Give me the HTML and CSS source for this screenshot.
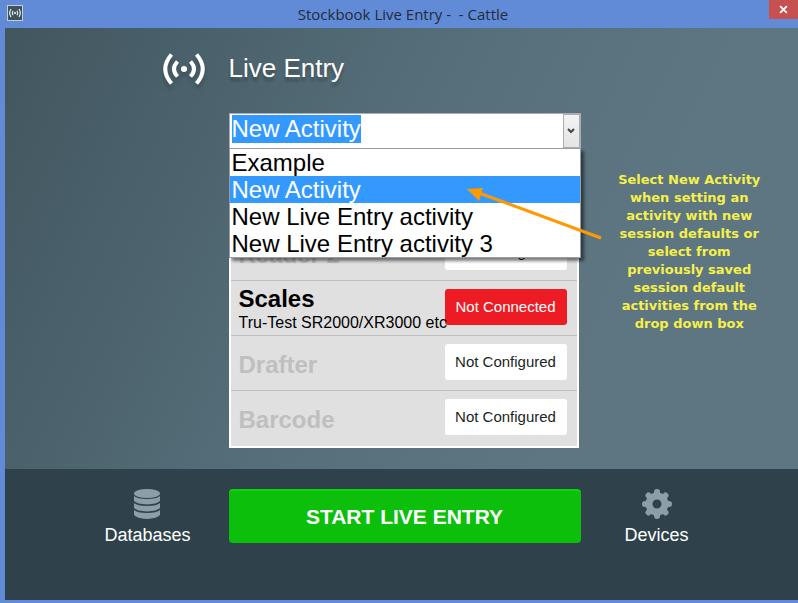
FILE: index.html
```html
<!DOCTYPE html>
<html lang="en">
<head>
  <meta charset="UTF-8" />
  <meta name="viewport" content="width=device-width, initial-scale=1.0" />
  <title>Stockbook Live Entry</title>
  <link rel="stylesheet" href="styles.css">
</head>
<body>
  <header class="titlebar">
    <svg class="app-icon" viewBox="0 0 16 16" aria-hidden="true">
      <rect x="0.5" y="0.5" width="15" height="15" fill="#3d545d" stroke="#c3cdd3" />
      <g fill="none" stroke="#e6ecef" stroke-width="1.2">
        <path d="M4 4Q1.400 8 4 12M12 4Q14.600 8 12 12M6 5.800Q4.600 8 6 10.200M10 5.800Q11.400 8 10 10.200" />
      </g>
      <circle cx="8" cy="8" r="1" fill="#fff" />
    </svg>
    <span class="titlebar-text">Stockbook Live Entry -&nbsp; - Cattle</span>
    <button class="close-btn" type="button" aria-label="Close">
      <svg viewBox="0 0 8 8" width="9" height="9"><path d="M1 1L7 7M7 1L1 7" stroke="#fff" stroke-width="1.600" /></svg>
    </button>
  </header>

  <main>
    <svg class="signal-icon" viewBox="0 0 42 32" aria-hidden="true">
      <g fill="none" stroke="#fff" stroke-width="4">
        <path d="M8.500 1.500Q-4 16 8.500 30.500M33.500 1.500Q46 16 33.500 30.500" />
        <path d="M14.500 8.500Q7.500 16 14.500 23.500M27.500 8.500Q34.500 16 27.500 23.500" />
      </g>
      <circle cx="21" cy="16" r="3" fill="#fff" />
    </svg>
    <h1>Live Entry</h1>

    <section class="session">
      <div class="combo">
        <input type="text" id="activity" class="combo-input" value="New Activity" aria-label="Activity" autocomplete="off" />
        <button class="combo-btn" type="button" aria-label="Show activities">
          <svg viewBox="0 0 8 6" width="8" height="6"><path d="M1 1L4 4L7 1" fill="none" stroke="#444" stroke-width="2" /></svg>
        </button>
        <select class="combo-list" id="activity-list" size="4" aria-label="Saved activities">
          <option>Example</option>
          <option selected>New Activity</option>
          <option>New Live Entry activity</option>
          <option>New Live Entry activity 3</option>
        </select>
      </div>

      <ul class="devices">
        <li class="device off">
          <div class="device-info"><h2>Reader 2</h2></div>
          <button class="status" type="button">Not Configured</button>
        </li>
        <li class="device">
          <div class="device-info">
            <h2>Scales</h2>
            <p>Tru-Test SR2000/XR3000 etc</p>
          </div>
          <button class="status error" type="button">Not Connected</button>
        </li>
        <li class="device off">
          <div class="device-info"><h2>Drafter</h2></div>
          <button class="status" type="button">Not Configured</button>
        </li>
        <li class="device off">
          <div class="device-info"><h2>Barcode</h2></div>
          <button class="status" type="button">Not Configured</button>
        </li>
      </ul>

      <svg class="arrow" viewBox="0 0 136 52" aria-hidden="true">
        <path d="M12 5L134 50" stroke="#ff9900" stroke-width="3" />
        <path d="M0 1L16 0L12 13Z" fill="#ff9900" />
      </svg>
    </section>

    <aside class="hint">
      <p>Select New Activity when setting an activity with new session defaults or select from previously saved session default activities from the drop down box</p>
    </aside>
  </main>

  <footer>
    <a class="nav-link databases" href="#databases">
      <svg viewBox="0 0 26 30" width="26" height="30" fill="#8c9fa9" aria-hidden="true">
        <ellipse cx="13" cy="4.500" rx="13" ry="4.500" />
        <path d="M0 7Q3 10 13 10T26 7V12Q23 15 13 15.500Q3 15 0 12Z" />
        <path d="M0 14Q3 17 13 17T26 14V19Q23 22 13 22.500Q3 22 0 19Z" />
        <path d="M0 21Q3 24 13 24T26 21V26Q23 29.500 13 30Q3 29.500 0 26Z" />
      </svg>
      Databases
    </a>
    <button class="start-btn" type="button">START LIVE ENTRY</button>
    <a class="nav-link settings" href="#devices">
      <svg viewBox="0 0 30 30" width="30" height="30" aria-hidden="true">
        <g stroke="#8c9fa9" stroke-width="6" stroke-linecap="round">
          <path d="M15 3V7M15 23V27M3 15H7M23 15H27M6.500 6.500L9 9M21 21L23.500 23.500M23.500 6.500L21 9M9 21L6.500 23.500" />
        </g>
        <circle cx="15" cy="15" r="8" fill="none" stroke="#8c9fa9" stroke-width="7" />
      </svg>
      Devices
    </a>
  </footer>

  <script>
    const activityInput = document.getElementById('activity');
    const activityList = document.getElementById('activity-list');

    activityList.addEventListener('change', () => {
      activityInput.value = activityList.value;
      activityInput.select();
    });

    activityInput.focus();
    activityInput.select();
  </script>
</body>
</html>
```
FILE: styles.css
```css
* {
  box-sizing: border-box;
}
body {
  display: flex;
  flex-direction: column;
  min-height: 100vh;
  margin: 0;
  padding: 0 0 3px 5px;
  background: #618bd6;
  color: #fff;
  font-family: "Liberation Sans", Arial, sans-serif;
}
h1, h2, p, ul {
  margin: 0;
  padding: 0;
}
button {
  border: 0;
  padding: 0;
  font-family: inherit;
  cursor: pointer;
}

.titlebar {
  display: grid;
  grid-template-columns: 32px 1fr 29px;
  height: 28px;
}
.app-icon {
  width: 16px;
  height: 16px;
  margin: 5px 0 0 2px;
}
.titlebar-text {
  color: #222c3c;
  font-family: "Open Sans", "Noto Sans", sans-serif;
  font-size: 15px;
  line-height: 28px;
  text-align: center;
}
.close-btn {
  display: flex;
  align-items: center;
  justify-content: center;
  height: 19px;
  background: #c75050;
}

main, footer {
  display: grid;
  grid-template-columns: 1fr 352px 1fr;
  padding-left: 6px;
}
main {
  flex: 1;
  grid-template-rows: auto 1fr;
  background: linear-gradient(115deg, #42565f 0%, #56707b 48%, #5e7681 75%);
}
.signal-icon {
  justify-self: end;
  width: 42px;
  height: 32px;
  margin: 25px 24px 0 0;
  filter: drop-shadow(0 4px 2px rgba(0, 0, 0, 0.2));
}
h1 {
  grid-column: 2 / 4;
  padding: 24px 0 28px;
  font-size: 26px;
  font-weight: normal;
  line-height: 33px;
  text-shadow: 0 4px 3px rgba(0, 0, 0, 0.25);
}

.session {
  position: relative;
  grid-column: 2;
}
.combo {
  position: relative;
  display: flex;
  height: 36px;
  border: 1px solid #abadb3;
  background: #fff;
}
.combo-input {
  flex: 1;
  min-width: 0;
  border: 0;
  padding: 0 2px 4px;
  outline: none;
  background: #fff;
  color: #000;
  font: 24px "Liberation Sans", Arial, sans-serif;
}
.combo-input::selection {
  background: #3399ff;
  color: #fff;
}
.combo-btn {
  display: flex;
  align-items: center;
  justify-content: center;
  width: 17px;
  border: 1px solid #abadb3;
  background: linear-gradient(#f3f3f3, #e4e4e4);
}
.combo-list {
  position: absolute;
  z-index: 2;
  top: 34px;
  left: -1px;
  right: -1px;
  height: 110px;
  border: 1px solid #9a9ca3;
  border-radius: 0;
  padding: 0;
  outline: none;
  overflow: hidden;
  background: #fff;
  color: #000;
  font: 24px "Liberation Sans", Arial, sans-serif;
  box-shadow: 3px 3px 3px rgba(0, 0, 0, 0.5);
}
.combo-list option {
  height: 27px;
  min-height: 0;
  padding: 0 2px;
  line-height: 27px;
}
.combo-list option:checked {
  background: #3399ff linear-gradient(#3399ff, #3399ff);
  color: #fff;
}

.devices {
  width: 350px;
  margin-top: 75px;
  border: 2px solid #fff;
  background: #e0e0e0;
  color: #000;
  list-style: none;
}
.device {
  display: flex;
  height: 55px;
  padding: 0 10px 0 8px;
  border-bottom: 1px solid #bfbfbf;
}
.device:last-child {
  border-bottom: 0;
}
.device-info {
  position: relative;
  z-index: 1;
  flex: 1;
  min-width: 0;
  padding-top: 4px;
  white-space: nowrap;
}
.off .device-info {
  padding-top: 15px;
  color: #bfbfbf;
}
.device h2 {
  font-size: 24px;
  line-height: 27px;
}
.device p {
  font-size: 16px;
  line-height: 21px;
}
.status {
  width: 122px;
  height: 36px;
  margin-top: 8px;
  padding-bottom: 2px;
  border-radius: 3px;
  background: #fff;
  color: #1c1f24;
  font-size: 15px;
}
.status.error {
  background: #ed1c24;
  color: #fff;
}

.arrow {
  position: absolute;
  z-index: 3;
  top: 75px;
  left: 238px;
  width: 136px;
  height: 52px;
}
.hint {
  padding-top: 58px;
  color: #f5f04a;
  font-family: "Arial Black", "DejaVu Sans", sans-serif;
  font-size: 13px;
  font-weight: bold;
  line-height: 18px;
  text-align: center;
}
.hint p {
  max-width: 150px;
  margin: 0 auto;
}

footer {
  align-items: start;
  padding-top: 20px;
  padding-bottom: 54px;
  background: #2f424b;
}
.nav-link {
  display: flex;
  flex-direction: column;
  align-items: center;
  gap: 6px;
  color: #fff;
  font-size: 18px;
  line-height: 21px;
  text-decoration: none;
}
.databases {
  justify-self: end;
  margin-right: 38px;
}
.settings {
  justify-self: start;
  margin-left: 44px;
}
.start-btn {
  height: 54px;
  border-top: 2px solid #0bd60b;
  border-radius: 4px;
  background: #0bbf0b;
  color: #fff;
  font-size: 21px;
  font-weight: bold;
}
```
